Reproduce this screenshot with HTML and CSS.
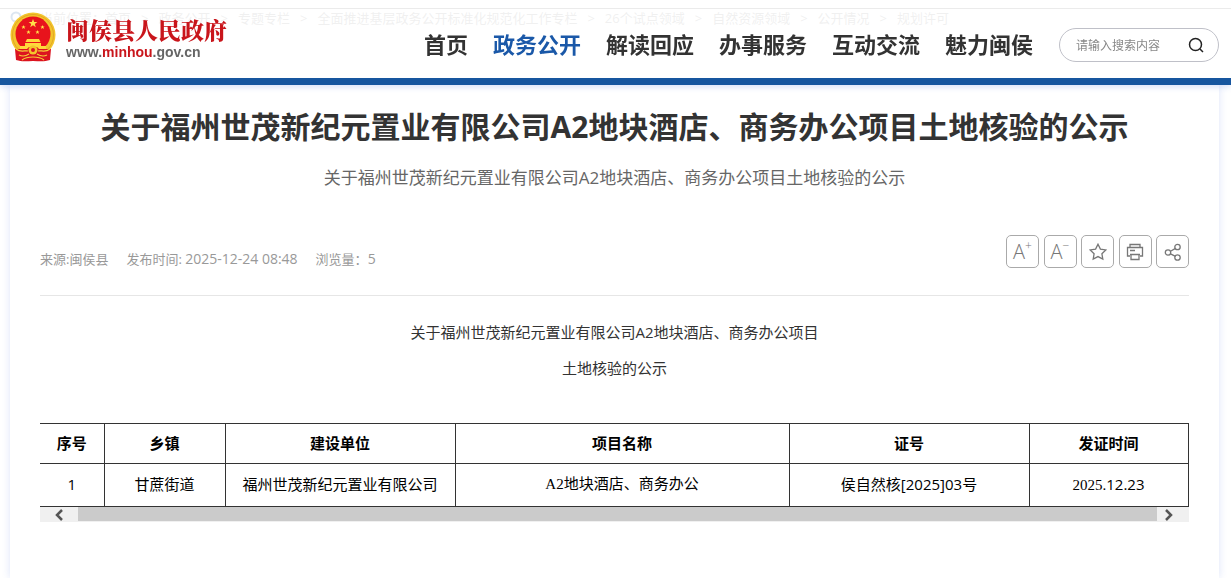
FILE: index.html
```html
<!DOCTYPE html>
<html lang="zh-CN">
<head>
    <meta charset="UTF-8">
    <meta name="viewport" content="width=device-width, initial-scale=1.0">
    <title>闽侯县人民政府</title>
    <link rel="stylesheet" href="styles.css">
</head>
<body>
    <header class="header">
        <a class="logo" href="#">
            <svg class="emblem" viewBox="0 0 46 50" aria-hidden="true">
                <circle cx="23" cy="23" r="22.5" fill="#f3c52c"/>
                <circle cx="23" cy="23" r="20.500" fill="none" stroke="#e3a824"/>
                <circle cx="23" cy="22" r="17.5" fill="#e8131c"/>
                <path d="M23 7l1.2 3h3.2l-2.6 2 1 3.2-2.8-2-2.8 2 1-3.2-2.6-2h3.2z" fill="#ffe14a"/>
                <g fill="#ffe14a">
                    <path id="star" d="M13.500 13l.6 1.500h1.500l-1.200 1 .5 1.500-1.400-.9-1.400.9.5-1.500-1.200-1h1.500z"/>
                    <use href="#star" x="5" y="5"/>
                    <use href="#star" x="14" y="5"/>
                    <use href="#star" x="19"/>
                </g>
                <path d="M17 27h12l1.500 3h-15zM15 31h16v3h5v3H10v-3h5z" fill="#ffd83c"/>
                <path d="M5 37h12l2-2h8l2 2h12l-1 11c-6 2-11 1-17 1S12 50 6 48z" fill="#dc1420"/>
                <circle cx="23" cy="38" r="4.500" fill="#f3c52c"/>
                <circle cx="23" cy="38" r="2" fill="#dc1420"/>
                <path d="M6 37c5 4 9 1 12 2M40 37c-5 4-9 1-12 2M12 48c5-4 17-4 22 0M9 43c4 2 7 1 10-1M37 43c-4 2-7 1-10-1" fill="none" stroke="#f6cf3a" stroke-width="1.200"/>
            </svg>
            <span class="logo-text">
                <span class="logo-name">闽侯县人民政府</span>
                <span class="logo-url">www.<em>minhou</em>.gov.cn</span>
            </span>
        </a>
        <nav class="nav">
            <a href="#">首页</a>
            <a href="#" class="active">政务公开</a>
            <a href="#">解读回应</a>
            <a href="#">办事服务</a>
            <a href="#">互动交流</a>
            <a href="#">魅力闽侯</a>
        </nav>
        <form class="search">
            <input type="text" placeholder="请输入搜索内容" aria-label="请输入搜索内容">
            <button type="submit" aria-label="搜索">
                <svg viewBox="0 0 16 16"><circle cx="7.500" cy="7.500" r="6"/><path d="M12 12l3 3"/></svg>
            </button>
        </form>
    </header>

    <div class="crumbs">
        <svg viewBox="0 0 12 14" aria-hidden="true"><circle cx="6" cy="6" r="4.500"/></svg>
        <span>当前位置：</span>
        <a href="#">首页</a><i>&gt;</i>
        <a href="#">政务公开</a><i>&gt;</i>
        <a href="#">专题专栏</a><i>&gt;</i>
        <a href="#">全面推进基层政务公开标准化规范化工作专栏</a><i>&gt;</i>
        <a href="#">26个试点领域</a><i>&gt;</i>
        <a href="#">自然资源领域</a><i>&gt;</i>
        <a href="#">公开情况</a><i>&gt;</i>
        <a href="#">规划许可</a>
    </div>

    <main class="article">
        <h1>关于福州世茂新纪元置业有限公司A2地块酒店、商务办公项目土地核验的公示</h1>
        <h2>关于福州世茂新纪元置业有限公司A2地块酒店、商务办公项目土地核验的公示</h2>

        <div class="info">
            <div class="meta">
                <span>来源:闽侯县</span>
                <span>发布时间: <b>2025-12-24 08:48</b></span>
                <span>浏览量：<b>5</b></span>
            </div>
            <div class="tools">
                <button type="button" title="放大">A<sup>+</sup></button>
                <button type="button" title="缩小">A<sup>−</sup></button>
                <button type="button" title="收藏">
                    <svg viewBox="0 0 18 18"><path d="M9 1.200l2.400 4.900 5.400.8-3.900 3.800.9 5.400L9 13.600l-4.800 2.500.9-5.400L1.200 6.900l5.400-.8z"/></svg>
                </button>
                <button type="button" title="打印">
                    <svg viewBox="0 0 18 18"><path d="M4 4V1.500h10V4M4 13H1.500V4.500h15V13H14M4 11.500h10M5 11.500v5h8v-5M4 7.500h5"/></svg>
                </button>
                <button type="button" title="分享">
                    <svg viewBox="0 0 18 18"><circle cx="4" cy="9.500" r="2.700"/><circle cx="13.500" cy="4" r="2.700"/><circle cx="13.500" cy="14.500" r="2.700"/><path d="M6.500 8.200l5-2.800M6.500 10.800l5 2.500"/></svg>
                </button>
            </div>
        </div>

        <div class="content">
            <p>关于福州世茂新纪元置业有限公司A2地块酒店、商务办公项目</p>
            <p>土地核验的公示</p>
        </div>

        <table class="data">
            <colgroup>
                <col class="c-no"><col class="c-town"><col class="c-unit"><col class="c-project"><col class="c-cert"><col class="c-date">
            </colgroup>
            <thead>
                <tr>
                    <th>序号</th>
                    <th>乡镇</th>
                    <th>建设单位</th>
                    <th>项目名称</th>
                    <th>证号</th>
                    <th>发证时间</th>
                </tr>
            </thead>
            <tbody>
                <tr>
                    <td>1</td>
                    <td>甘蔗街道</td>
                    <td>福州世茂新纪元置业有限公司</td>
                    <td class="serif">A2地块酒店、商务办公</td>
                    <td>侯自然核[2025]03号</td>
                    <td><span class="serif">2025.</span>12.23</td>
                </tr>
            </tbody>
        </table>
        <div class="scrollbar">
            <button type="button" aria-label="向左"><svg viewBox="0 0 10 12"><path d="M8 1L3 6l5 5"/></svg></button>
            <div class="thumb"></div>
            <button type="button" aria-label="向右"><svg viewBox="0 0 10 12"><path d="M2 1l5 5-5 5"/></svg></button>
        </div>
    </main>
</body>
</html>
```
FILE: styles.css
```css
* {
    box-sizing: border-box;
}
body {
    margin: 0;
    background: #fff;
    color: #333;
    font-family: "Open Sans", "Noto Sans CJK SC", sans-serif;
    font-size: 15px;
}
a {
    color: inherit;
    text-decoration: none;
}
button {
    padding: 0;
    border: none;
    background: none;
    font-family: inherit;
    cursor: pointer;
}
svg {
    fill: none;
    stroke: currentColor;
}

/* header */
.header {
    position: fixed;
    top: 0;
    left: 0;
    right: 0;
    z-index: 10;
    display: flex;
    align-items: center;
    height: 85px;
    padding: 0 12px 0 10px;
    background: rgba(255, 255, 255, 0.85);
    border-bottom: 7px solid #17569f;
    box-shadow: 0 2px 6px rgba(60, 100, 220, 0.2);
}
.logo {
    display: flex;
    align-items: center;
    gap: 10px;
    margin-right: auto;
    padding-bottom: 4px;
}
.emblem {
    width: 46px;
    height: 50px;
    stroke: none;
}
.logo-text {
    display: flex;
    flex-direction: column;
    padding-top: 2px;
}
.logo-name {
    color: #c9151b;
    font-family: "Noto Serif CJK SC", "Noto Sans CJK SC", serif;
    font-size: 23px;
    font-weight: 900;
    line-height: 28px;
}
.logo-url {
    color: #666;
    font-family: "Liberation Sans", Arial, sans-serif;
    font-size: 14px;
    font-weight: bold;
    line-height: 16px;
}
.logo-url em {
    color: #c9151b;
    font-style: normal;
}
.nav {
    display: flex;
    gap: 25px;
    margin-right: 26px;
    padding-top: 10px;
    font-size: 22px;
    font-weight: bold;
    line-height: 32px;
    white-space: nowrap;
}
.nav .active {
    color: #1a58a8;
}
.search {
    display: flex;
    align-items: center;
    width: 160px;
    height: 34px;
    margin-top: 12px;
    padding: 0 14px 0 16px;
    border: 1px solid #bfc0c8;
    border-radius: 17px;
    background: #fff;
}
.search input {
    flex: 1;
    min-width: 0;
    padding: 0;
    border: none;
    outline: none;
    background: none;
    font-family: inherit;
    font-size: 12px;
}
.search input::placeholder {
    color: #888;
}
.search button {
    display: flex;
    color: #222;
}
.search svg {
    width: 16px;
    height: 16px;
    stroke-width: 1.5;
}

/* breadcrumb, slides under the header */
.crumbs {
    display: flex;
    align-items: center;
    height: 77px;
    margin-top: 8px;
    padding: 0 10px 58px;
    border-top: 1px solid #777;
    color: #999;
    font-size: 13px;
    line-height: 18px;
    white-space: nowrap;
}
.crumbs svg {
    width: 12px;
    height: 14px;
    margin-right: 18px;
    color: #17569f;
    stroke-width: 2;
}
.crumbs i {
    margin: 0 10px;
    font-style: normal;
}

/* article */
.article {
    min-height: calc(100vh - 85px);
    margin: 0 12px 0 10px;
    padding: 18px 30px 0;
    background: #fff;
    box-shadow: 0 0 8px rgba(60, 100, 220, 0.18);
}
h1 {
    margin: 0;
    font-size: 30px;
    line-height: 48px;
    text-align: center;
}
h2 {
    margin: 12px 0 0;
    color: #666;
    font-size: 17px;
    font-weight: normal;
    line-height: 30px;
    text-align: center;
}
.info {
    display: flex;
    justify-content: space-between;
    padding: 42px 0 27px;
    border-bottom: 1px solid #e6e6e6;
}
.meta {
    display: flex;
    gap: 18px;
    padding-top: 15px;
    color: #999;
    font-size: 13px;
    line-height: 18px;
}
.meta b {
    font-size: 14px;
    font-weight: normal;
}
.tools {
    display: flex;
    justify-content: space-between;
    width: 183px;
}
.tools button {
    display: flex;
    align-items: center;
    justify-content: center;
    width: 33px;
    height: 33px;
    border: 1px solid #aaa;
    border-radius: 5px;
    color: #777;
    font-size: 20px;
    font-weight: 300;
    line-height: 24px;
}
.tools sup {
    font-size: 12px;
    line-height: 12px;
    align-self: flex-start;
    padding-top: 4px;
}
.tools svg {
    width: 18px;
    height: 18px;
    stroke-width: 1.3;
}
.content {
    padding: 18px 0 37px;
    text-align: center;
}
.content p {
    margin: 0;
    line-height: 36px;
}

/* table */
.data {
    width: calc(100% - 1px);
    table-layout: fixed;
    border-collapse: collapse;
    color: #000;
}
.data th, .data td {
    height: 43px;
    padding: 0 0 2px;
    border: 1px solid #333;
    text-align: center;
    line-height: 24px;
}
.data th {
    height: 40px;
}
.data th:first-child, .data td:first-child {
    border-left: none;
}
.c-no { width: 64px; }
.c-town { width: 121px; }
.c-unit { width: 230px; }
.c-project { width: 334px; }
.c-cert { width: 240px; }
.c-date { width: 159px; }
.serif {
    font-family: "Liberation Serif", "Noto Sans CJK SC", serif;
}
.scrollbar {
    display: flex;
    height: 15px;
    background: #f0f0f0;
    color: #555;
}
.scrollbar button {
    width: 38px;
    color: inherit;
    line-height: 0;
}
.scrollbar button:last-child {
    width: 32px;
    padding-right: 8px;
}
.scrollbar svg {
    width: 10px;
    height: 12px;
    stroke-width: 2.5;
}
.thumb {
    flex: 1;
    height: 14px;
    background: #cbcbcb;
}
```
